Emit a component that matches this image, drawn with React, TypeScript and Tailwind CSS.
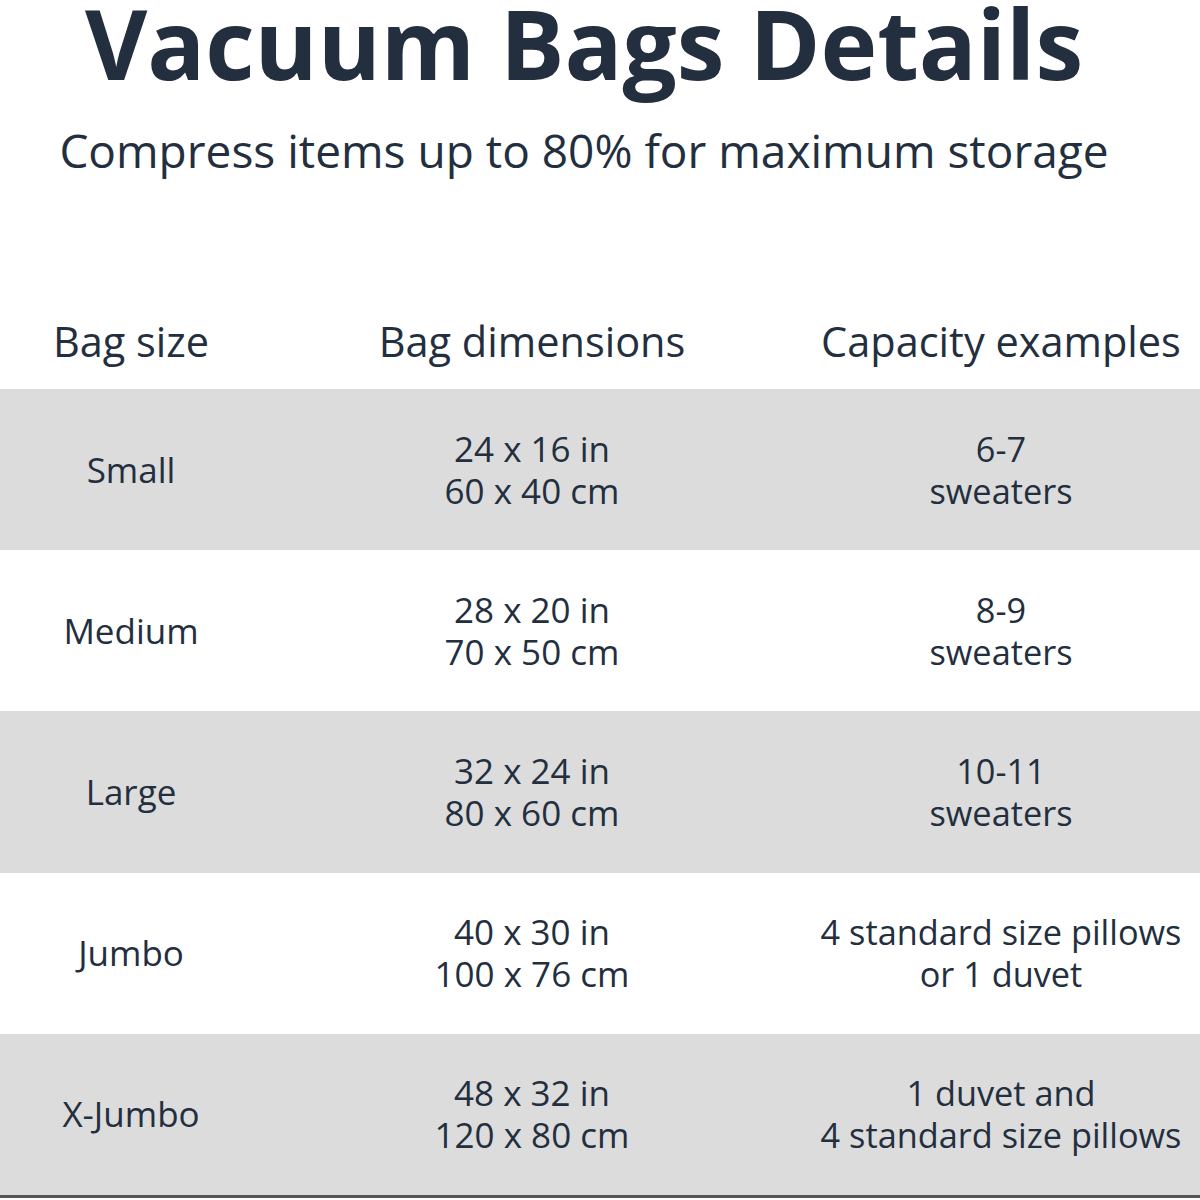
import React from "react";

const rows = [
  { size: "Small", dims: ["24 x 16 in", "60 x 40 cm"], cap: ["6-7", "sweaters"], gray: true },
  { size: "Medium", dims: ["28 x 20 in", "70 x 50 cm"], cap: ["8-9", "sweaters"], gray: false },
  { size: "Large", dims: ["32 x 24 in", "80 x 60 cm"], cap: ["10-11", "sweaters"], gray: true },
  { size: "Jumbo", dims: ["40 x 30 in", "100 x 76 cm"], cap: ["4 standard size pillows", "or 1 duvet"], gray: false },
  { size: "X-Jumbo", dims: ["48 x 32 in", "120 x 80 cm"], cap: ["1 duvet and", "4 standard size pillows"], gray: true },
];

export default function App() {
  return (
    <div
      className="w-[1200px] h-[1200px] bg-white text-[#232f3e] overflow-hidden"
      style={{ fontFamily: '"Open Sans", "Noto Sans", sans-serif' }}
    >
      <div className="pr-[32px] text-center">
        <h1 className="text-[96px] leading-[86px] font-bold">Vacuum Bags Details</h1>
        <p className="mt-[34px] text-[46px] leading-[60px]">Compress items up to 80% for maximum storage</p>
      </div>
      <div className="mt-[136px] mb-[23px] grid grid-cols-[262px_540px_1fr] text-[41.5px] leading-[50px] text-center">
        <div>Bag size</div>
        <div>Bag dimensions</div>
        <div>Capacity examples</div>
      </div>
      <div className="flex flex-col">
        {rows.map((r) => (
          <div
            key={r.size}
            className={
              "grid grid-cols-[262px_540px_1fr] h-[161.2px] items-center text-center text-[35px] leading-[42px] " +
              (r.gray ? "bg-[#dcdcdc]" : "bg-white")
            }
          >
            <div>{r.size}</div>
            <div>
              <div>{r.dims[0]}</div>
              <div>{r.dims[1]}</div>
            </div>
            <div className="text-[34.3px]">
              <div className="whitespace-nowrap">{r.cap[0]}</div>
              <div className="whitespace-nowrap">{r.cap[1]}</div>
            </div>
          </div>
        ))}
        <div className="h-[3px] bg-[#555555]" />
      </div>
    </div>
  );
}
